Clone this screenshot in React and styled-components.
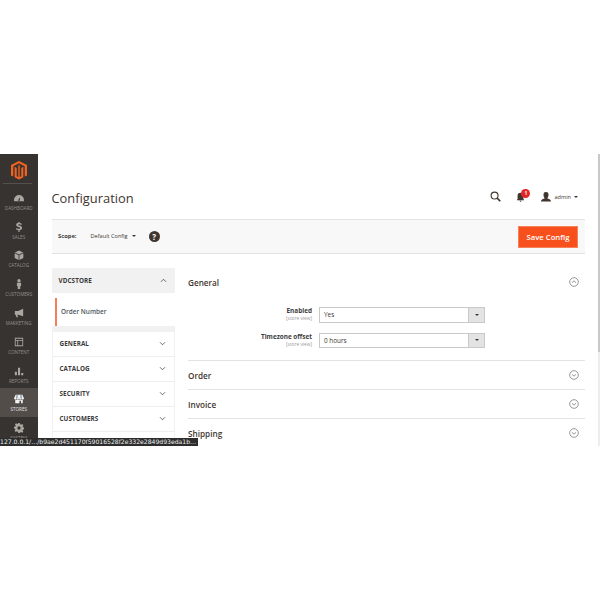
import React from 'react';
import styled, { createGlobalStyle } from 'styled-components';

const Global = createGlobalStyle`
  html, body { margin: 0; padding: 0; background: #fff; }
  body { font-family: "Open Sans", "Noto Sans", sans-serif; color: #41362f; }
`;
const Frame = styled.div`
  position: relative; margin-top: 154px; height: 292px; width: 600px; display: flex; overflow: hidden;
`;
const Sidebar = styled.nav`
  width: 37.5px; flex: none; background: #373330; display: flex; flex-direction: column; align-items: stretch;
`;
const LogoBox = styled.div`
  height: 35px; margin: 0 6px 3px 3px; border-bottom: 1px solid #55504c; display: flex; justify-content: center; padding: 7px 0 0 3px; box-sizing: border-box;
`;
const NavItem = styled.div`
  height: 28.8px; flex: none; display: flex; flex-direction: column; align-items: center; justify-content: flex-start;
  padding-top: 6px; box-sizing: border-box; gap: 2px;
  background: ${p => (p.$active ? '#524d49' : 'transparent')};
  color: ${p => (p.$active ? '#e6e6e6' : '#95918c')};
  font-size: 4.6px; line-height: 6px; text-transform: uppercase; white-space: nowrap;
`;
const NavIcon = styled.svg`width: 10px; height: 10px; fill: ${p => (p.$active ? '#f2f2f2' : '#aaa6a0')}; display: block;`;
const Main = styled.main`flex: 1; min-width: 0; padding: 0 15px 0 14px; display: flex; flex-direction: column;`;
const Header = styled.header`height: 65px; flex: none; display: flex; align-items: center; justify-content: space-between; padding: 27px 7px 5px 0; box-sizing: border-box;`;
const Title = styled.h1`margin: 0; font-size: 12.9px; font-weight: 400; color: #41362f; line-height: 20px;`;
const Tools = styled.div`display: flex; align-items: center; color: #41362f; padding-bottom: 2px;`;
const SearchIcon = styled.svg`width: 11px; height: 11px; display: block; fill: none; stroke: #41362f; stroke-width: 1.2;`;
const Bell = styled.div`position: relative; width: 9px; height: 10px; margin-left: 15px;`;
const BellIcon = styled.svg`width: 9px; height: 10px; display: block; fill: #41362f;`;
const Badge = styled.span`
  position: absolute; left: 5px; top: -3px; width: 9px; height: 9px; border-radius: 50%; background: #e22626;
  color: #fff; font-size: 5px; font-weight: 700; line-height: 9px; text-align: center;
`;
const UserIcon = styled.svg`width: 10px; height: 10px; margin-left: 16px; fill: #41362f; display: block;`;
const UserName = styled.span`font-size: 5.6px; color: #41362f; margin-left: 3px;`;
const Caret = styled.i`
  display: inline-block; margin-left: ${p => p.$ml ?? 3}px; border-left: 2px solid transparent; border-right: 2px solid transparent;
  border-top: 2.5px solid #41362f;
`;
const ScopeBar = styled.div`
  flex: none; height: 35px; background: #f8f8f8; border-top: 1px solid #e3e3e3; border-bottom: 1px solid #e3e3e3; display: flex; align-items: center;
  padding: 0 7px 1px 6.5px; box-sizing: border-box;
`;
const ScopeLabel = styled.span`font-size: 5.8px; font-weight: 700; color: #3d3d3d;`;
const ScopeValue = styled.span`font-size: 5.6px; color: #41362f; margin-left: 14px; display: inline-flex; align-items: center;`;
const Help = styled.span`
  width: 11px; height: 11px; border-radius: 50%; background: #41362f; color: #fff; font-size: 8px; font-weight: 700; line-height: 11px; text-align: center; margin-left: 13px;
`;
const SaveButton = styled.button`
  margin-left: auto; width: 60px; height: 22px; background: #f8501c; border: 1px solid #f5825a; color: #fff; font-family: inherit; font-size: 7.7px; font-weight: 600; padding: 0; margin-top: 1px;
`;
const Columns = styled.div`flex: 1; min-height: 0; display: flex; margin-top: 14px; gap: 13.5px;`;
const Tabs = styled.aside`width: 123px; flex: none;`;
const TabHead = styled.div`
  height: 25px; box-sizing: border-box; padding: 0 8px 1px 7px; display: flex; align-items: center; justify-content: space-between;
  background: ${p => (p.$open ? '#f1f1f1' : '#fff')};
  border-bottom: ${p => (p.$open ? '0' : '1px solid #eeeeee')};
  border-left: ${p => (p.$open ? '0' : '1px solid #f1f1f1')}; border-right: ${p => (p.$open ? '0' : '1px solid #f1f1f1')};
  font-size: 6.3px; font-weight: 700; color: #3a3a3a; text-transform: uppercase; letter-spacing: .1px;
`;
const TabItem = styled.div`
  height: 28px; margin: 5px 0 0 3.5px; border-left: 2px solid #f47e5b; display: flex; align-items: center; padding: 0 0 1px 4px; box-sizing: border-box; font-size: 6.4px; font-weight: 600; color: #4c545c;
`;
const TabGap = styled.div`height: 6px; background: #f1f1f1;`;
const Chevron = styled.svg`width: 7px; height: 5px; fill: none; stroke: #41362f; stroke-width: .9; display: block;`;
const Content = styled.section`flex: 1; min-width: 0;`;
const Section = styled.div`
  height: ${p => p.$h}px; box-sizing: border-box;
  border-bottom: ${p => (p.$last ? '0' : '1px solid #e3e3e3')};
`;
const SectionHead = styled.div`
  height: 29px; box-sizing: border-box; padding-bottom: 1px; display: flex; align-items: center; justify-content: space-between; font-size: 8.2px; font-weight: 600; color: #41362f;
`;
const Field = styled.div`display: flex; gap: 7px; margin-top: 10px;`;
const FieldLabel = styled.div`
  width: 124px; flex: none; text-align: right; font-size: 6.4px; font-weight: 700; color: #3d3d3d; line-height: 8px;
  small { display: block; font-size: 4.8px; font-weight: 400; color: #9a9a9a; line-height: 6px; }
`;
const Select = styled.div`
  width: 166px; height: 15.5px; box-sizing: border-box; border: 1px solid #c9c9c9; background: #fff; display: flex; align-items: center; justify-content: space-between; font-size: 6.4px; color: #41362f; padding-left: 4px;
`;
const SelectArrow = styled.span`
  width: 15px; height: 100%; background: #e3e3e3; border-left: 1px solid #c9c9c9; display: flex; align-items: center; justify-content: center;
`;
const Circle = styled.svg`width: 10px; height: 10px; fill: none; stroke: #7d7d7d; stroke-width: .8; display: block; margin-right: 6px;`;
const ScrollTrack = styled.div`position: absolute; right: 0; top: 0; width: 2px; height: 100%; background: #ededed;`;
const ScrollThumb = styled.div`width: 100%; height: 198px; background: #c8c8c8;`;
const StatusBar = styled.div`
  position: absolute; left: 0; bottom: 0; width: 198px; height: 8px; background: #2d2d2d; color: #f0f0f0; font-family: "DejaVu Sans", sans-serif; font-size: 6.1px; line-height: 8px; white-space: nowrap; overflow: hidden;
`;

const icons = {
  dashboard: <path d="M6 2.5a6 6 0 0 0-6 6c0 .6.1 1 .2 1.5h11.6c.1-.5.2-.9.2-1.5a6 6 0 0 0-6-6zm1 6.2a1.2 1.2 0 0 1-2 0l2-3.7z" />,
  sales: <path d="M5.3 0h1.4v1.200c1.300.1 2.200.6 2.800 1.100l-.9 1.300C8 3 7.100 2.600 6.100 2.600c-.8 0-1.200.3-1.200.8 0 1.400 4.800.7 4.800 3.900 0 1.400-1 2.300-3 2.500V12H5.300v-2.200C4 9.700 2.900 9.100 2.200 8.400l.9-1.300c.7.600 1.700 1.100 2.800 1.100.9 0 1.500-.3 1.500-.9 0-1.500-4.800-.7-4.800-3.900 0-1.300 1-2.200 2.700-2.400z" />,
  catalog: <path d="M6 .5 11 3 6 5.500 1 3zM.8 4l4.700 2.300V12L.8 9.500zm10.400 0v5.500L6.500 12V6.300z" />,
  customers: <path d="M6 0a2 2 0 1 1 0 4 2 2 0 0 1 0-4zM3.500 4.500h5v4h-1V12H4.500V8.500h-1z" />,
  marketing: <path d="M11 1v9L5 8H4l.8 3H3L2 8H1V3.500h4z" />,
  content: <path d="M1 1h10v10H1zm1 1v1.500h8V2zm0 2.500V10h2V4.500zm3 0V10h5V4.500z" fillRule="evenodd" />,
  reports: <path d="M1 7h2.500v4H1zM4.800 2h2.500v9H4.800zM8.600 8.500h2.500V11H8.600z" />,
  stores: (
    <>
      <path d="M2 1h8l2 4a1.500 1.500 0 0 1-3 0 1.500 1.500 0 0 1-3 0 1.500 1.500 0 0 1-3 0 1.500 1.500 0 0 1-3 0zM1.500 7h9v4h-2V8h-2v3h-5z" />
      <path fill="#6d7f9a" d="M3.200 1h1.200L4 5.500H2.600zM7.600 1h1.200L9.400 5.500H8z" />
    </>
  ),
  system: <path d="M5 0h2l.3 1.600 1.200.5L9.900 1.200l1.400 1.400-1 1.400.5 1.200 1.600.3v2l-1.600.3-.5 1.200.9 1.400-1.400 1.400-1.400-.9-1.200.5L7 12H5l-.3-1.600-1.200-.5-1.400.9L.7 9.400l1-1.400-.5-1.200L0 6.500v-2l1.600-.3.500-1.200-1-1.400L2.500.2l1.400 1 1.200-.5zM6 4a2 2 0 1 0 0 4 2 2 0 0 0 0-4z" fillRule="evenodd" />,
};

const navItems = [
  ['dashboard', 'Dashboard'], ['sales', 'Sales'], ['catalog', 'Catalog'], ['customers', 'Customers'],
  ['marketing', 'Marketing'], ['content', 'Content'], ['reports', 'Reports'], ['stores', 'Stores'], ['system', 'System'],
];

const Down = () => <Chevron viewBox="0 0 8 6"><path d="M1 1.500 4 4.500 7 1.500" /></Chevron>;
const Up = () => <Chevron viewBox="0 0 8 6"><path d="M1 4.500 4 1.500 7 4.500" /></Chevron>;
const CircleIcon = ({ up }) => (
  <Circle viewBox="0 0 10 10">
    <circle cx="5" cy="5" r="4.300" />
    <path d={up ? 'M3 5.700 5 3.800 7 5.700' : 'M3 4.300 5 6.200 7 4.300'} />
  </Circle>
);

export default function App() {
  return (
    <>
      <Global />
      <Frame>
        <Sidebar>
          <LogoBox>
            <svg width="16" height="19" viewBox="0 0 14 19" preserveAspectRatio="none">
              <path fill="#f26322" d="M7 0 0 4v10.500l2 1.100V5.200L7 2.300l5 2.900v10.400l2-1.100V4z" />
              <path fill="#f26322" d="M3.200 5.800v10.400L7 18.500l3.800-2.300V5.800L9 6.900v8.300L7.600 16V3.900L6.400 4.600V16L5 15.200V6.900z" />
            </svg>
          </LogoBox>
          {navItems.map(([k, label]) => (
            <NavItem key={k} $active={k === 'stores'}>
              <NavIcon viewBox="0 0 12 12" $active={k === 'stores'}>{icons[k]}</NavIcon>
              {label}
            </NavItem>
          ))}
        </Sidebar>
        <Main>
          <Header>
            <Title>Configuration</Title>
            <Tools>
              <SearchIcon viewBox="0 0 12 12">
                <circle cx="5" cy="5" r="3.800" /><path d="M7.800 7.800 11.200 11.200" strokeWidth="1.800" />
              </SearchIcon>
              <Bell>
                <BellIcon viewBox="0 0 10 12"><path d="M5 1a3.500 3.500 0 0 0-3.500 3.500v4L.5 10h9L8.500 8.500v-4A3.500 3.500 0 0 0 5 1zM3.600 10.600h2.800L5 12z" /></BellIcon>
                <Badge>1</Badge>
              </Bell>
              <UserIcon viewBox="0 0 10 10"><path d="M5 0a2.500 2.500 0 0 1 2.500 2.700C7.500 4.400 6.800 5.800 6.200 6.200 7.500 6.700 10 7.200 10 9.500H0C0 7.200 2.500 6.700 3.800 6.200 3.200 5.800 2.500 4.400 2.500 2.700A2.500 2.500 0 0 1 5 0z" /></UserIcon>
              <UserName>admin</UserName>
              <Caret />
            </Tools>
          </Header>
          <ScopeBar>
            <ScopeLabel>Scope:</ScopeLabel>
            <ScopeValue>Default Config<Caret $ml={4} /></ScopeValue>
            <Help>?</Help>
            <SaveButton>Save Config</SaveButton>
          </ScopeBar>
          <Columns>
            <Tabs>
              <TabHead $open>VDCSTORE<Up /></TabHead>
              <TabItem>Order Number</TabItem>
              <TabGap />
              {['General', 'Catalog', 'Security', 'Customers'].map(t => (
                <TabHead key={t}>{t}<Down /></TabHead>
              ))}
              <TabHead />
            </Tabs>
            <Content>
              <Section $h={93}>
                <SectionHead>General<CircleIcon up /></SectionHead>
                <Field>
                  <FieldLabel>Enabled<small>[store view]</small></FieldLabel>
                  <Select>Yes<SelectArrow><Caret $ml={0} /></SelectArrow></Select>
                </Field>
                <Field>
                  <FieldLabel>Timezone offset<small>[store view]</small></FieldLabel>
                  <Select>0 hours<SelectArrow><Caret $ml={0} /></SelectArrow></Select>
                </Field>
              </Section>
              <Section $h={29}><SectionHead>Order<CircleIcon /></SectionHead></Section>
              <Section $h={29}><SectionHead>Invoice<CircleIcon /></SectionHead></Section>
              <Section $h={29} $last><SectionHead>Shipping<CircleIcon /></SectionHead></Section>
            </Content>
          </Columns>
        </Main>
        <ScrollTrack><ScrollThumb /></ScrollTrack>
        <StatusBar>127.0.0.1/…/b9ae2d451170f59016528f2e332e2849d93eda1b…</StatusBar>
      </Frame>
    </>
  );
}
